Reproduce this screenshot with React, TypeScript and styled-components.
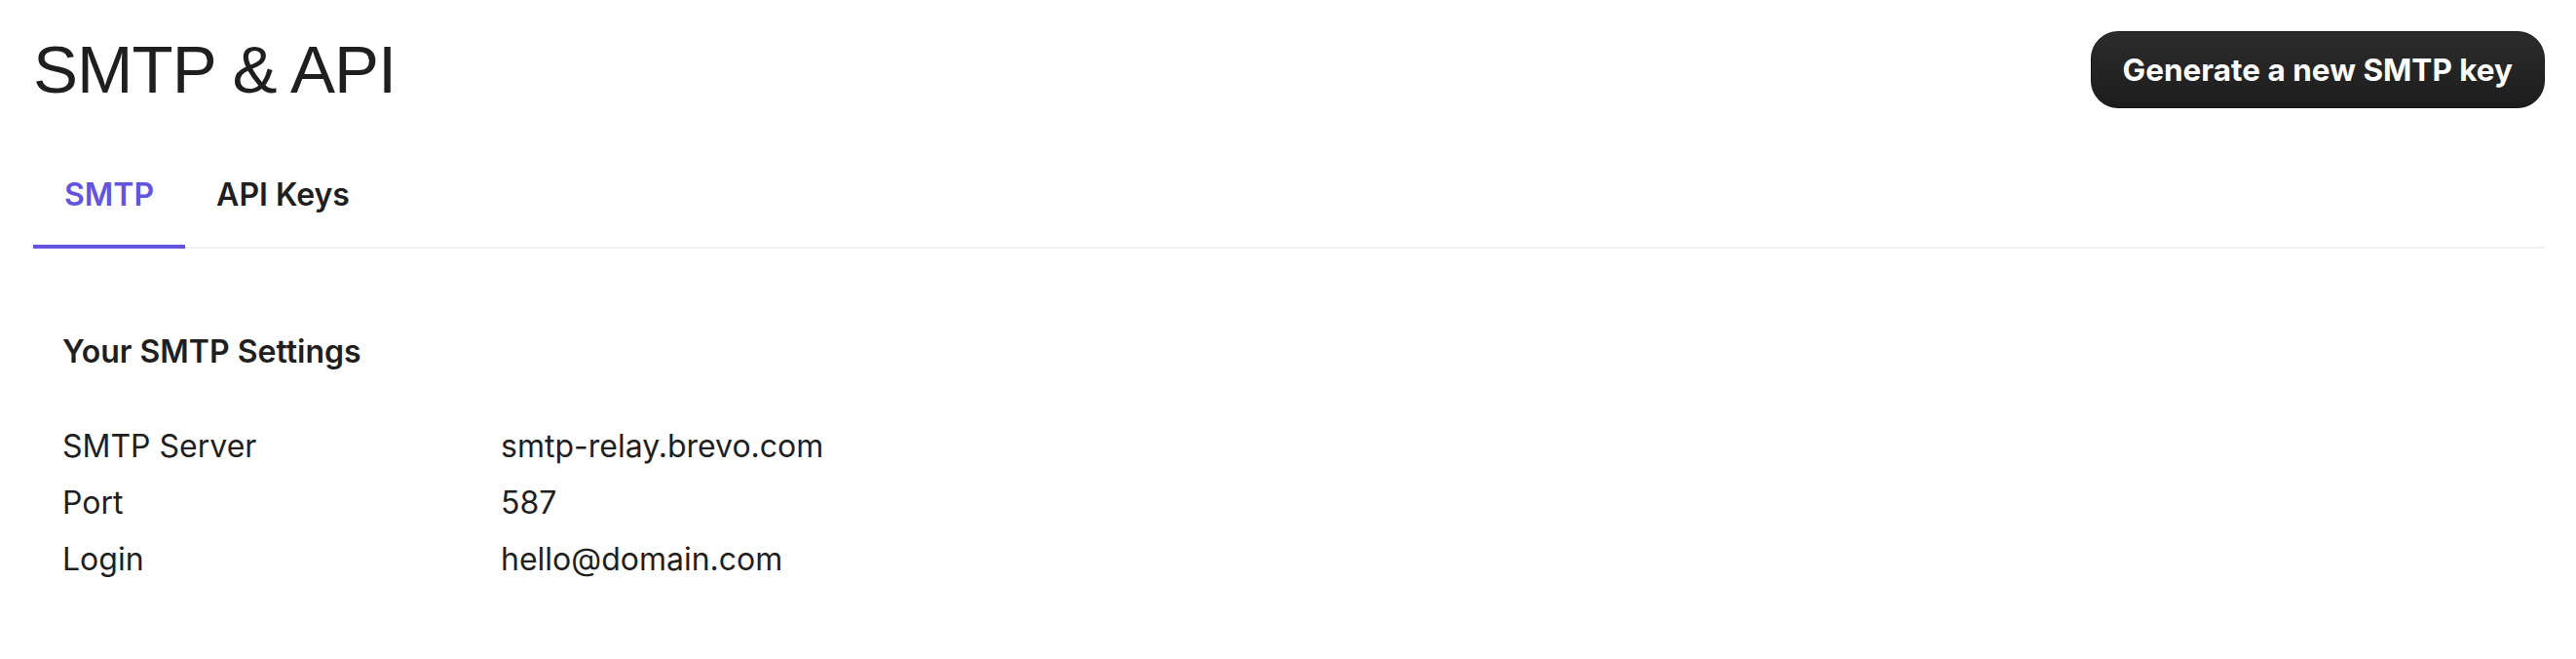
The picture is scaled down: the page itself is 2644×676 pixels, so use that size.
import styled, { createGlobalStyle } from "styled-components";

const GlobalStyle = createGlobalStyle`
    html, body {
        margin: 0;
        padding: 0;
        background: #ffffff;
    }
    body {
        font-family: Inter, "Noto Sans", sans-serif;
        color: #1f1f1f;
    }
`;

const Page = styled.div`
    padding: 32px 32px 0 34px;
`;

const Header = styled.header`
    display: flex;
    justify-content: space-between;
    align-items: center;
    height: 79px;
`;

const Title = styled.h1`
    margin: 0;
    font-family: "Liberation Sans", Arial, sans-serif;
    font-size: 69px;
    font-weight: 400;
    line-height: 1;
    letter-spacing: -1px;
    color: #1f1f1f;
`;

const PrimaryButton = styled.button`
    height: 79px;
    padding: 0 32px;
    border-radius: 28px;
    border: 1px solid #151515;
    background: linear-gradient(180deg, #2c2c2c 0%, #1d1d1d 100%);
    color: #ffffff;
    font-family: Inter, "Noto Sans", sans-serif;
    font-size: 31.5px;
    font-weight: 700;
    cursor: pointer;
`;

const TabBar = styled.nav`
    display: flex;
    margin-top: 45px;
    border-bottom: 2px solid #efefef;
`;

const Tab = styled.div<{ active?: boolean }>`
    padding: 24px 32px 31px;
    margin-bottom: -2px;
    font-size: 32px;
    line-height: 40px;
    font-weight: 600;
    color: ${props => props.active ? '#6354de' : '#1f1f1f'};
    border-bottom: 4px solid ${props => props.active ? '#6354de' : 'transparent'};
`;

const Section = styled.section`
    padding: 86px 0 0 30px;
`;

const SectionHeading = styled.h3`
    margin: 0 0 48px;
    font-size: 32px;
    line-height: 40px;
    font-weight: 600;
`;

const SettingsGrid = styled.dl`
    display: grid;
    grid-template-columns: 450px auto;
    margin: 0;
    font-size: 32px;
    line-height: 58px;
`;

const Label = styled.dt`
    margin: 0;
`;

const Value = styled.dd`
    margin: 0;
`;

const settings = [
    { label: "SMTP Server", value: "smtp-relay.brevo.com" },
    { label: "Port", value: "587" },
    { label: "Login", value: "hello@domain.com" },
];

function App() {
    return (
        <Page>
            <GlobalStyle />
            <Header>
                <Title>SMTP &amp; API</Title>
                <PrimaryButton>Generate a new SMTP key</PrimaryButton>
            </Header>

            <TabBar>
                <Tab active>SMTP</Tab>
                <Tab>API Keys</Tab>
            </TabBar>

            <Section>
                <SectionHeading>Your SMTP Settings</SectionHeading>
                <SettingsGrid>
                    {settings.map(row => (
                        <>
                            <Label key={row.label}>{row.label}</Label>
                            <Value key={row.value}>{row.value}</Value>
                        </>
                    ))}
                </SettingsGrid>
            </Section>
        </Page>
    );
}

export default App;
